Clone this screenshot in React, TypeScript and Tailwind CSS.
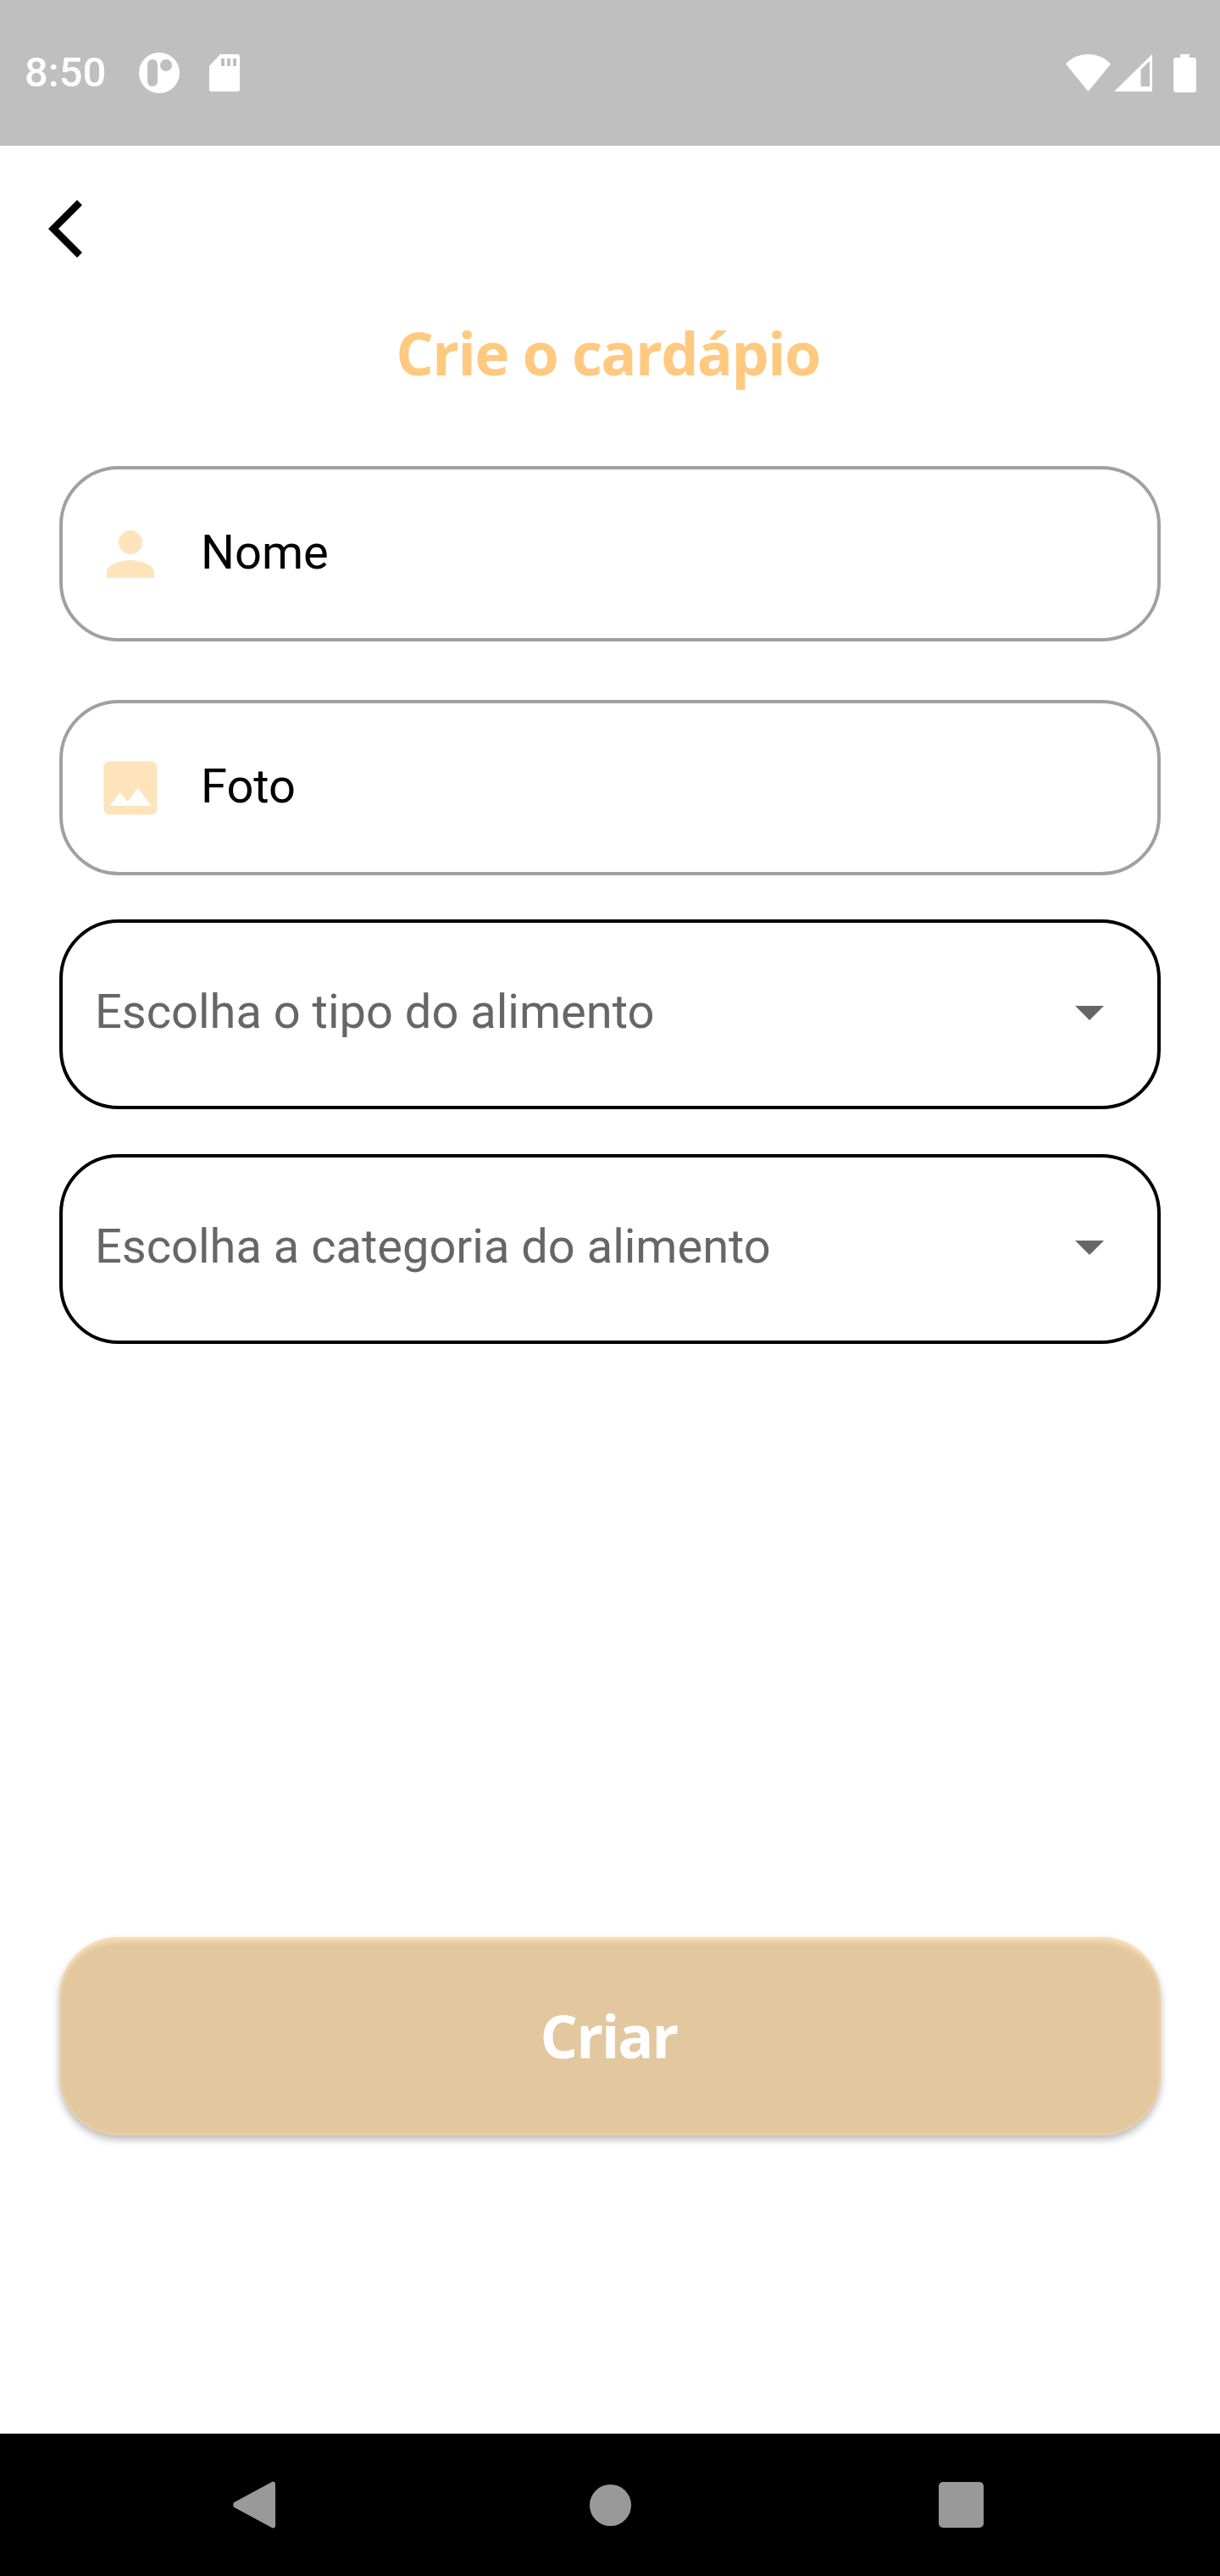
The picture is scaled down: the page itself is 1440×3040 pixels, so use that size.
import React from "react";

const PERSON = "M12 12c2.21 0 4-1.79 4-4s-1.79-4-4-4-4 1.79-4 4 1.79 4 4 4zm0 2c-2.67 0-8 1.34-8 4v2h16v-2c0-2.66-5.33-4-8-4z";
const IMAGE = "M21 19V5c0-1.1-.9-2-2-2H5c-1.1 0-2 .9-2 2v14c0 1.1.9 2 2 2h14c1.1 0 2-.9 2-2zM8.5 13.5l2.5 3.01L14.5 12l4.5 6H5l3.5-4.5z";

function TextField({ path, label, className }: { path: string; label: string; className: string }) {
  return (
    <div className={`flex h-[207px] items-center rounded-[70px] border-[4px] border-[#a0a0a0] pl-[38px] ${className}`}>
      <svg viewBox="0 0 24 24" className="h-[84px] w-[84px] shrink-0" fill="#ffe3ba">
        <path d={path} fillRule="evenodd" />
      </svg>
      <span className="ml-[41px] pb-[4px] text-[56px] leading-[66px] text-black [font-family:Roboto,sans-serif]">{label}</span>
    </div>
  );
}

function SelectField({ label, className }: { label: string; className: string }) {
  return (
    <div className={`flex h-[224px] items-start justify-between rounded-[70px] border-[4px] border-black pl-[38px] pr-[63px] pt-[72px] ${className}`}>
      <span className="text-[56px] leading-[66px] text-[#666666] [font-family:Roboto,sans-serif]">{label}</span>
      <svg viewBox="0 0 34 17" className="mt-[26px] h-[17px] w-[34px]" fill="#666666">
        <path d="M0 0h34L17 17z" />
      </svg>
    </div>
  );
}

export default function App() {
  return (
    <div className="flex h-[3040px] w-[1440px] flex-col overflow-hidden bg-white">
      <div className="flex h-[172px] shrink-0 items-center justify-between bg-[#bfbfbf] pl-[29px] pr-[28px]">
        <div className="flex items-center">
          <span className="w-[96px] text-[49px] font-medium leading-[58px] text-white [font-family:Roboto,sans-serif]">8:50</span>
          <svg viewBox="0 0 48 48" className="ml-[39px] h-[48px] w-[48px]">
            <circle cx="24" cy="24" r="24" fill="#fff" />
            <rect x="10" y="8" width="12" height="32" rx="6" fill="#bfbfbf" />
            <circle cx="32" cy="15" r="7" fill="#bfbfbf" />
          </svg>
          <svg viewBox="0 0 36 44" className="ml-[35px] h-[44px] w-[36px]">
            <path d="M13 0h20a3 3 0 0 1 3 3v38a3 3 0 0 1-3 3H3a3 3 0 0 1-3-3V14z" fill="#fff" />
            <path d="M14 5h4v9h-4zM21 5h4v9h-4zM28 5h4v9h-4z" fill="#bfbfbf" />
          </svg>
        </div>
        <div className="flex items-center">
          <svg viewBox="0 0 53 44" className="h-[44px] w-[53px]">
            <path d="M0 11.5C7 4 16 0 26.5 0S46 4 53 11.500L26.5 44z" fill="#fff" />
          </svg>
          <svg viewBox="0 0 45 44" className="ml-[4px] h-[44px] w-[45px]">
            <path d="M45 0v44H0z" fill="#fff" />
            <path d="M31.500 38V18L42 8V38z" fill="#bfbfbf" />
          </svg>
          <svg viewBox="0 0 27 45" className="ml-[25px] h-[45px] w-[27px]">
            <path d="M8 0h11v4h5a3 3 0 0 1 3 3v35a3 3 0 0 1-3 3H3a3 3 0 0 1-3-3V7a3 3 0 0 1 3-3h5z" fill="#fff" />
          </svg>
        </div>
      </div>

      <main className="flex min-h-0 flex-1 flex-col">
        <svg viewBox="0 0 40 68" className="ml-[57px] mt-[64px] h-[68px] w-[40px] shrink-0" fill="none" stroke="#000" strokeWidth="8.500">
          <path d="M37 3 6 34l31 31" />
        </svg>
        <h1 className="mt-[64px] pr-[5px] text-center text-[70px] font-bold leading-[96px] tracking-[-1.6px] text-[#ffc97f] [font-family:'Open_Sans',sans-serif]">
          Crie o cardápio
        </h1>
        <div className="flex flex-col px-[70px]">
          <TextField path={PERSON} label="Nome" className="mt-[86px]" />
          <TextField path={IMAGE} label="Foto" className="mt-[69px]" />
          <SelectField label="Escolha o tipo do alimento" className="mt-[52px]" />
          <SelectField label="Escolha a categoria do alimento" className="mt-[53px]" />
          <button className="mt-[700px] flex h-[234px] items-center justify-center rounded-[70px] bg-[#e3c79e] pb-[2px] pr-[3px] text-[70px] font-bold leading-[96px] tracking-[-2px] text-white shadow-[inset_0_8px_6px_-3px_#fadfb8,inset_0_0_4px_#fadfb8,0_5px_10px_rgba(0,0,0,0.28)] [font-family:'Open_Sans',sans-serif]">
            Criar
          </button>
        </div>
      </main>

      <div className="flex h-[168px] shrink-0 items-center bg-black pl-[275px]">
        <svg viewBox="0 0 50 56" className="h-[56px] w-[50px]" fill="#999999">
          <path d="M45 1.500 1.500 25a4 4 0 0 0 0 6L45 54.500c2 2 5 1 5-2V3.500c0-2.500-3-4-5-2z" />
        </svg>
        <div className="ml-[371px] h-[49px] w-[49px] rounded-full bg-[#999999]" />
        <div className="ml-[363px] h-[54px] w-[53px] rounded-[5px] bg-[#999999]" />
      </div>
    </div>
  );
}
